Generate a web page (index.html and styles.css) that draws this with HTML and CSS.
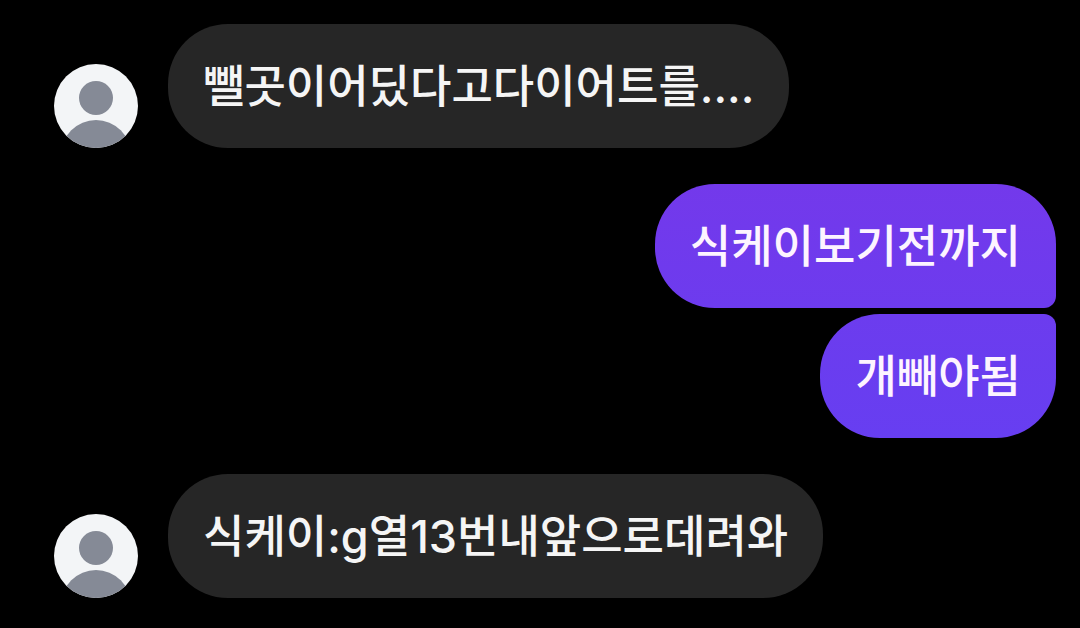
FILE: index.html
```html
<!DOCTYPE html>
<html lang="ko">
<head>
<meta charset="UTF-8">
<meta name="viewport" content="width=device-width, initial-scale=1.0">
<title>채팅</title>
<link rel="stylesheet" href="styles.css">
</head>
<body>
<main class="chat">
    <div class="group received">
        <svg class="avatar" viewBox="0 0 84 84" aria-hidden="true">
            <clipPath id="circle1"><circle cx="42" cy="42" r="42"/></clipPath>
            <g clip-path="url(#circle1)">
                <rect class="avatar-bg" width="84" height="84"/>
                <circle class="avatar-person" cx="42" cy="34" r="17"/>
                <circle class="avatar-person" cx="42" cy="91" r="35"/>
            </g>
        </svg>
        <p class="bubble">뺄곳이어딨다고다이어트를....</p>
    </div>

    <div class="group sent">
        <p class="bubble first">식케이보기전까지</p>
        <p class="bubble last">개빼야됨</p>
    </div>

    <div class="group received">
        <svg class="avatar" viewBox="0 0 84 84" aria-hidden="true">
            <clipPath id="circle2"><circle cx="42" cy="42" r="42"/></clipPath>
            <g clip-path="url(#circle2)">
                <rect class="avatar-bg" width="84" height="84"/>
                <circle class="avatar-person" cx="42" cy="34" r="17"/>
                <circle class="avatar-person" cx="42" cy="91" r="35"/>
            </g>
        </svg>
        <p class="bubble">식케이:g열13번내앞으로데려와</p>
    </div>
</main>
</body>
</html>
```

FILE: styles.css
```css
body {
    margin: 0;
    background-color: #000;
    color: #f5f5f5;
    font-family: Inter, "Noto Sans CJK KR", sans-serif;
    font-size: 45px;
    font-weight: 500;
    line-height: 60px;
}

.chat {
    display: flex;
    flex-direction: column;
    gap: 36px;
    padding: 24px 24px 30px 54px;
}

.group {
    display: flex;
}

.received {
    align-items: flex-end;
    gap: 30px;
}

.sent {
    flex-direction: column;
    align-items: flex-end;
    gap: 6px;
}

.avatar {
    width: 84px;
    height: 84px;
    flex-shrink: 0;
}

.avatar-bg {
    fill: #f3f5f7;
}

.avatar-person {
    fill: #858a96;
}

.bubble {
    margin: 0;
    padding: 33px 35px 31px;
    border-radius: 60px;
    background-color: #262626;
}

.sent .bubble {
    color: #fdf4ff;
}

.sent .first {
    background: linear-gradient(#7339eb, #6d3bee);
    border-bottom-right-radius: 12px;
}

.sent .last {
    background: linear-gradient(#6c3cee, #673ef1);
    border-top-right-radius: 12px;
}
```
